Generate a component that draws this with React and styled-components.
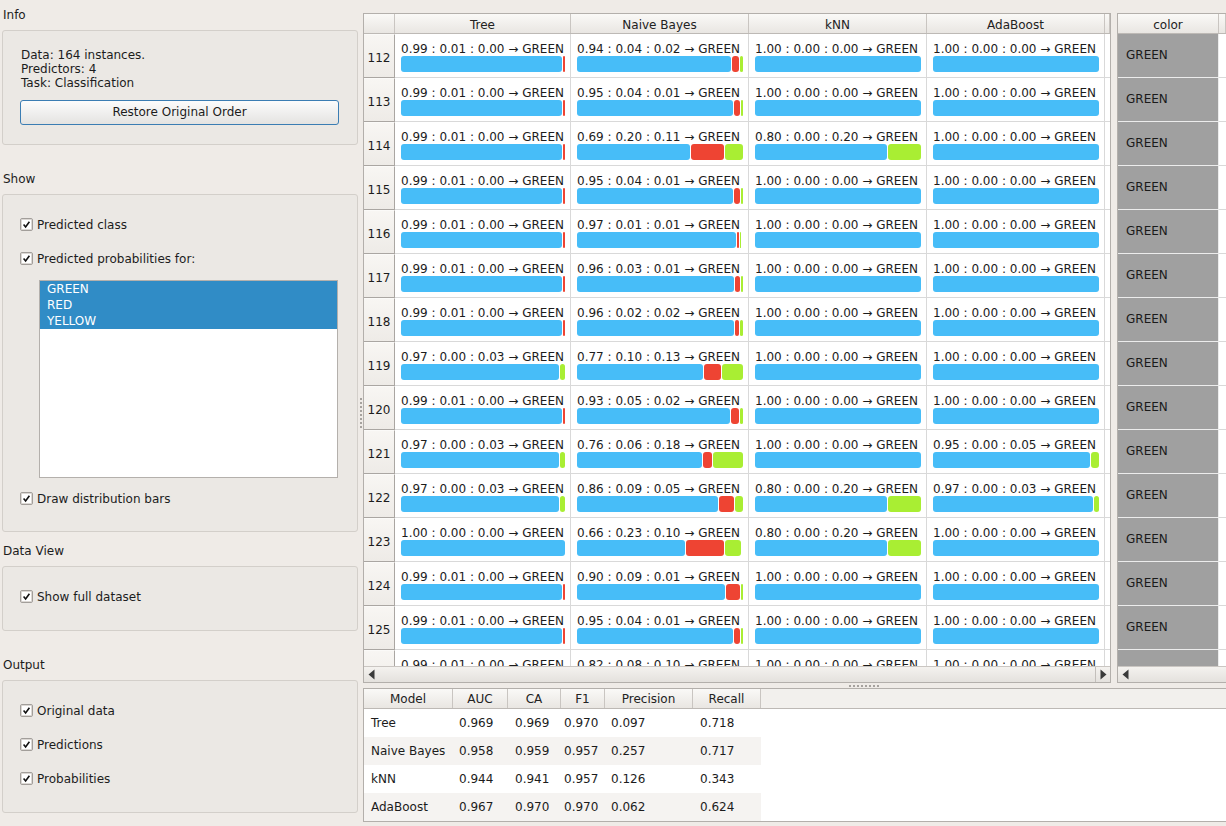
import styled, { createGlobalStyle } from "styled-components";

const GlobalStyle = createGlobalStyle`
  html, body { margin: 0; padding: 0; }
  body {
    font-family: "DejaVu Sans", "Liberation Sans", sans-serif;
    font-size: 12px;
    color: #1c1c1c;
    background: #efebe7;
  }
  * { box-sizing: border-box; }
`;

const Window = styled.div`
  display: flex;
  width: 1226px;
  height: 826px;
  overflow: hidden;
  background: #efebe7;
`;

/* ---------- left control panel ---------- */

const Sidebar = styled.aside`
  flex: none;
  width: 358px;
  padding: 7px 0 0 2px;
  display: flex;
  flex-direction: column;
`;

const SectionLabel = styled.div`
  height: 14px;
  line-height: 16px;
  padding-left: 1px;
  margin-top: ${(p) => p.$top || 0}px;
  margin-bottom: 9px;
`;

const GroupBox = styled.div`
  flex: none;
  height: ${(p) => p.$h}px;
  border: 1px solid #d3cfca;
  border-radius: 3px;
  background: #ebe8e4;
  padding: ${(p) => p.$pt}px 18px 0 17px;
  display: flex;
  flex-direction: column;
`;

const InfoLine = styled.div`
  line-height: 14px;
  padding-left: 1px;
`;

const Button = styled.button`
  margin-top: 10px;
  height: 25px;
  width: 100%;
  border: 1px solid #3b7db3;
  border-radius: 3px;
  background: linear-gradient(#fcfcfc, #e4e3e1);
  font: inherit;
  color: inherit;
  padding: 0 0 1px;
`;

const CheckRow = styled.label`
  display: flex;
  align-items: center;
  gap: 4px;
  height: 20px;
  margin-top: ${(p) => p.$top || 0}px;
`;

const CheckText = styled.span`
  padding-top: 2px;
`;

const Box = styled.span`
  flex: none;
  width: 13px;
  height: 13px;
  border: 1px solid #a29e9a;
  border-radius: 2px;
  background: #fff;
  box-shadow: inset 0 0 0 1px #dcd8d4;
  display: flex;
  align-items: center;
  justify-content: center;
`;

const ListBox = styled.div`
  margin: 12px 1px 0 19px;
  height: 198px;
  border: 1px solid #b4b0ac;
  background: #fff;
`;

const ListItem = styled.div`
  height: 16px;
  line-height: 16px;
  padding-left: 7px;
  background: ${(p) => (p.$selected ? "#308cc6" : "transparent")};
  color: ${(p) => (p.$selected ? "#fff" : "inherit")};
`;

const Checkbox = ({ children, top }) => (
  <CheckRow $top={top}>
    <Box>
      <svg width="9" height="9" viewBox="0 0 9 9">
        <path d="M1.6 4.6 L3.6 7 L7.4 1.8" fill="none" stroke="#111" strokeWidth="1.6" />
      </svg>
    </Box>
    <CheckText>{children}</CheckText>
  </CheckRow>
);

/* ---------- splitters ---------- */

const VSplit = styled.div`
  flex: none;
  width: ${(p) => p.$w}px;
  display: flex;
  align-items: center;
  justify-content: center;
`;

const VDots = styled.div`
  width: 2px;
  height: 30px;
  background: repeating-linear-gradient(180deg, #a6a29e 0 2px, transparent 2px 4px);
`;

const HSplit = styled.div`
  flex: none;
  height: 5px;
  display: flex;
  align-items: center;
  padding-left: 486px;
`;

const HDots = styled.div`
  width: 30px;
  height: 2px;
  background: repeating-linear-gradient(90deg, #a6a29e 0 2px, transparent 2px 4px);
`;

/* ---------- right area ---------- */

const Main = styled.main`
  flex: 1;
  min-width: 0;
  display: flex;
  flex-direction: column;
  padding-top: 13px;
`;

const TopSection = styled.div`
  flex: none;
  height: 670px;
  display: flex;
`;

const TableFrame = styled.div`
  flex: ${(p) => (p.$w ? "none" : "1")};
  width: ${(p) => (p.$w ? `${p.$w}px` : "auto")};
  min-width: 0;
  border: 1px solid #b3afab;
  border-right-width: ${(p) => (p.$w ? 1 : 0)}px;
  background: #fff;
  display: flex;
  flex-direction: column;
  overflow: hidden;
`;

const HeaderRow = styled.div`
  flex: none;
  display: flex;
  height: 20px;
  background: #f2f0ed;
  border-bottom: 1px solid #bdb9b5;
`;

const HeaderCell = styled.div`
  flex: ${(p) => (p.$w ? "none" : "1")};
  width: ${(p) => (p.$w ? `${p.$w}px` : "auto")};
  line-height: 19px;
  padding-top: ${(p) => p.$pt ?? 2}px;
  text-align: center;
  white-space: nowrap;
  overflow: hidden;
  background: linear-gradient(#faf9f7, #e9e6e2);
  border-right: 1px solid #c9c5c1;
  color: #222;
`;

const Body = styled.div`
  flex: 1;
  overflow: hidden;
`;

const Row = styled.div`
  display: flex;
  height: 44px;
`;

const RowHead = styled.div`
  flex: none;
  width: 31px;
  display: flex;
  align-items: center;
  justify-content: center;
  padding-top: 3px;
  background: linear-gradient(#f8f6f3, #eeebe7);
  border-right: 1px solid #aaa6a2;
  border-bottom: 1px solid #aaa6a2;
  border-top: 1px solid #fbfaf8;
`;

const PredCell = styled.div`
  flex: none;
  width: ${(p) => p.$w}px;
  padding: 8px 5px 0 6px;
  border-right: 1px solid #d9d9d9;
  border-bottom: 1px solid #d9d9d9;
  white-space: nowrap;
  overflow: hidden;
`;

const PredText = styled.div`
  height: 14px;
  line-height: 14px;
`;

const Bar = styled.div`
  display: flex;
  gap: 1px;
  height: 16px;
`;

const Segment = styled.div`
  flex-basis: 0;
  min-width: 1px;
  border-radius: 3px;
  background: ${(p) => p.$color};
`;

const Filler = styled.div`
  flex: 1;
  border-bottom: 1px solid #d9d9d9;
`;

const ColorCell = styled.div`
  flex: none;
  width: 101px;
  display: flex;
  align-items: center;
  padding: 0 0 2px 8px;
  background: #a0a0a0;
  border-right: 1px solid #ececec;
  border-bottom: 1px solid #ececec;
  color: #1a1a1a;
`;

const ScrollBar = styled.div`
  flex: none;
  height: 16px;
  display: flex;
  justify-content: space-between;
  background: linear-gradient(#f4f2ef, #e4e1dd);
  border-top: 1px solid #cac6c2;
`;

const ArrowButton = styled.div`
  width: 15px;
  display: flex;
  align-items: center;
  justify-content: center;
  border-left: ${(p) => (p.$right ? "1px solid #c3bfbb" : "none")};
`;

const Arrow = ({ right }) => (
  <ArrowButton $right={right}>
    <svg width="7" height="11" viewBox="0 0 7 11">
      <path d={right ? "M0.5 0.5 L6.5 5.5 L0.5 10.5 Z" : "M6.5 0.5 L0.5 5.5 L6.5 10.5 Z"} fill="#3a3a3a" />
    </svg>
  </ArrowButton>
);

/* ---------- bottom scores table ---------- */

const ScoreFrame = styled.div`
  flex: none;
  height: 134px;
  border: 1px solid #b3afab;
  border-right: none;
  background: #fff;
  overflow: hidden;
`;

const ScoreRow = styled.div`
  display: flex;
  height: 28px;
`;

const ScoreCell = styled.div`
  flex: none;
  width: ${(p) => p.$w}px;
  display: flex;
  align-items: center;
  padding-left: ${(p) => p.$pad}px;
  background: ${(p) => (p.$alt ? "#f5f3f1" : "#fff")};
`;

const COLORS = ["#47bdf8", "#ee4433", "#a9ee33"];
const ONE = [1, 0, 0];

const rows = [
  [112, [[0.99, 0.01, 0], [0.94, 0.04, 0.02], ONE, ONE]],
  [113, [[0.99, 0.01, 0], [0.95, 0.04, 0.01], ONE, ONE]],
  [114, [[0.99, 0.01, 0], [0.69, 0.2, 0.11], [0.8, 0, 0.2], ONE]],
  [115, [[0.99, 0.01, 0], [0.95, 0.04, 0.01], ONE, ONE]],
  [116, [[0.99, 0.01, 0], [0.97, 0.01, 0.01], ONE, ONE]],
  [117, [[0.99, 0.01, 0], [0.96, 0.03, 0.01], ONE, ONE]],
  [118, [[0.99, 0.01, 0], [0.96, 0.02, 0.02], ONE, ONE]],
  [119, [[0.97, 0, 0.03], [0.77, 0.1, 0.13], ONE, ONE]],
  [120, [[0.99, 0.01, 0], [0.93, 0.05, 0.02], ONE, ONE]],
  [121, [[0.97, 0, 0.03], [0.76, 0.06, 0.18], ONE, [0.95, 0, 0.05]]],
  [122, [[0.97, 0, 0.03], [0.86, 0.09, 0.05], [0.8, 0, 0.2], [0.97, 0, 0.03]]],
  [123, [[1, 0, 0], [0.66, 0.23, 0.1], [0.8, 0, 0.2], ONE]],
  [124, [[0.99, 0.01, 0], [0.9, 0.09, 0.01], ONE, ONE]],
  [125, [[0.99, 0.01, 0], [0.95, 0.04, 0.01], ONE, ONE]],
  [126, [[0.99, 0.01, 0], [0.82, 0.08, 0.1], ONE, ONE]],
];

const models = [
  { name: "Tree", w: 176 },
  { name: "Naive Bayes", w: 178 },
  { name: "kNN", w: 178 },
  { name: "AdaBoost", w: 178 },
];

const scoreCols = [
  { name: "Model", w: 89, pad: 7 },
  { name: "AUC", w: 55, pad: 6 },
  { name: "CA", w: 53, pad: 7 },
  { name: "F1", w: 44, pad: 3 },
  { name: "Precision", w: 88, pad: 6 },
  { name: "Recall", w: 68, pad: 7 },
];

const scores = [
  ["Tree", "0.969", "0.969", "0.970", "0.097", "0.718"],
  ["Naive Bayes", "0.958", "0.959", "0.957", "0.257", "0.717"],
  ["kNN", "0.944", "0.941", "0.957", "0.126", "0.343"],
  ["AdaBoost", "0.967", "0.970", "0.970", "0.062", "0.624"],
];

const DistBar = ({ probs }) => (
  <Bar>
    {probs.map((p, i) =>
      p > 0 ? <Segment key={i} $color={COLORS[i]} style={{ flexGrow: p }} /> : null
    )}
  </Bar>
);

const App = () => (
  <Window>
    <GlobalStyle />
    <Sidebar>
      <SectionLabel>Info</SectionLabel>
      <GroupBox $h={115} $pt={17}>
        <InfoLine>Data: 164 instances.</InfoLine>
        <InfoLine>Predictors: 4</InfoLine>
        <InfoLine>Task: Classification</InfoLine>
        <Button>Restore Original Order</Button>
      </GroupBox>

      <SectionLabel $top={26}>Show</SectionLabel>
      <GroupBox $h={338} $pt={19}>
        <Checkbox>Predicted class</Checkbox>
        <Checkbox top={14}>Predicted probabilities for:</Checkbox>
        <ListBox>
          <ListItem $selected>GREEN</ListItem>
          <ListItem $selected>RED</ListItem>
          <ListItem $selected>YELLOW</ListItem>
        </ListBox>
        <Checkbox top={10}>Draw distribution bars</Checkbox>
      </GroupBox>

      <SectionLabel $top={11}>Data View</SectionLabel>
      <GroupBox $h={65} $pt={19}>
        <Checkbox>Show full dataset</Checkbox>
      </GroupBox>

      <SectionLabel $top={26}>Output</SectionLabel>
      <GroupBox $h={133} $pt={19}>
        <Checkbox>Original data</Checkbox>
        <Checkbox top={14}>Predictions</Checkbox>
        <Checkbox top={14}>Probabilities</Checkbox>
      </GroupBox>
    </Sidebar>

    <VSplit $w={5}>
      <VDots />
    </VSplit>

    <Main>
      <TopSection>
        <TableFrame $w={748}>
          <HeaderRow>
            <HeaderCell $w={31} />
            {models.map((m) => (
              <HeaderCell key={m.name} $w={m.w}>{m.name}</HeaderCell>
            ))}
            <HeaderCell />
          </HeaderRow>
          <Body>
            {rows.map(([id, preds]) => (
              <Row key={id}>
                <RowHead>{id}</RowHead>
                {preds.map((p, i) => (
                  <PredCell key={i} $w={models[i].w}>
                    <PredText>
                      {p.map((v) => v.toFixed(2)).join(" : ")} → GREEN
                    </PredText>
                    <DistBar probs={p} />
                  </PredCell>
                ))}
                <Filler />
              </Row>
            ))}
          </Body>
          <ScrollBar>
            <Arrow />
            <Arrow right />
          </ScrollBar>
        </TableFrame>

        <VSplit $w={6} />

        <TableFrame>
          <HeaderRow>
            <HeaderCell $w={101}>color</HeaderCell>
            <HeaderCell />
          </HeaderRow>
          <Body>
            {rows.map(([id]) => (
              <Row key={id}>
                <ColorCell>GREEN</ColorCell>
                <Filler />
              </Row>
            ))}
          </Body>
          <ScrollBar>
            <Arrow />
          </ScrollBar>
        </TableFrame>
      </TopSection>

      <HSplit>
        <HDots />
      </HSplit>

      <ScoreFrame>
        <HeaderRow>
          {scoreCols.map((c) => (
            <HeaderCell key={c.name} $w={c.w} $pt={1}>{c.name}</HeaderCell>
          ))}
        </HeaderRow>
        {scores.map((r, ri) => (
          <ScoreRow key={r[0]}>
            {r.map((v, ci) => (
              <ScoreCell key={ci} $w={scoreCols[ci].w} $pad={scoreCols[ci].pad} $alt={ri % 2 === 1}>
                {v}
              </ScoreCell>
            ))}
          </ScoreRow>
        ))}
      </ScoreFrame>
    </Main>
  </Window>
);

export default App;
